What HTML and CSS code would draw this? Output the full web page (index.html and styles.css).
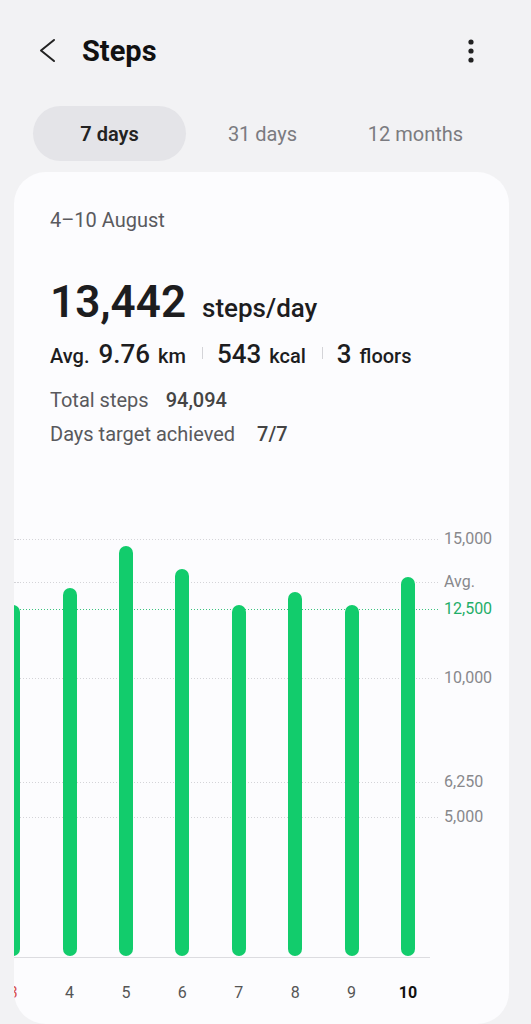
FILE: index.html
```html
<!DOCTYPE html>
<html lang="en">
<head>
  <meta charset="UTF-8">
  <meta name="viewport" content="width=device-width, initial-scale=1.0">
  <title>Steps</title>
  <link rel="stylesheet" href="styles.css">
</head>
<body>
  <header class="top-bar">
    <svg class="back" width="20" height="28" viewBox="0 0 20 28">
      <polyline points="16,3 3,13.5 16,24" fill="none" stroke="#222" stroke-width="2" stroke-linecap="round" stroke-linejoin="round"/>
    </svg>
    <h1>Steps</h1>
    <svg class="more" width="8" height="26" viewBox="0 0 8 26">
      <circle cx="4" cy="4" r="2.6" fill="#222"/>
      <circle cx="4" cy="13" r="2.6" fill="#222"/>
      <circle cx="4" cy="22" r="2.6" fill="#222"/>
    </svg>
  </header>

  <nav class="tabs">
    <div class="tab active">7 days</div>
    <div class="tab">31 days</div>
    <div class="tab">12 months</div>
  </nav>

  <section class="card">
    <div class="range">4–10 August</div>

    <div class="big">
      <span class="big-num">13,442</span>
      <span class="big-unit">steps/day</span>
    </div>

    <div class="stats">
      <span class="unit">Avg.</span>
      <span class="num first">9.76</span>
      <span class="unit">km</span>
      <span class="sep"></span>
      <span class="num">543</span>
      <span class="unit">kcal</span>
      <span class="sep"></span>
      <span class="num">3</span>
      <span class="unit">floors</span>
    </div>

    <div class="line"><span class="label">Total steps</span><span class="value">94,094</span></div>
    <div class="line"><span class="label">Days target achieved</span><span class="value wide">7/7</span></div>

    <div class="chart">
      <div class="plot">
        <div class="grid" style="bottom: 417px"><span class="grid-label">15,000</span></div>
        <div class="grid" style="bottom: 374px"><span class="grid-label">Avg.</span></div>
        <div class="grid target" style="bottom: 347px"><span class="grid-label">12,500</span></div>
        <div class="grid" style="bottom: 278px"><span class="grid-label">10,000</span></div>
        <div class="grid" style="bottom: 174px"><span class="grid-label">6,250</span></div>
        <div class="grid" style="bottom: 139px"><span class="grid-label">5,000</span></div>

        <div class="bars">
          <div class="col"><div class="bar" style="height: 351px"></div></div>
          <div class="col"><div class="bar" style="height: 368px"></div></div>
          <div class="col"><div class="bar" style="height: 410px"></div></div>
          <div class="col"><div class="bar" style="height: 387px"></div></div>
          <div class="col"><div class="bar" style="height: 351px"></div></div>
          <div class="col"><div class="bar" style="height: 364px"></div></div>
          <div class="col"><div class="bar" style="height: 351px"></div></div>
          <div class="col"><div class="bar" style="height: 379px"></div></div>
        </div>
      </div>

      <div class="days">
        <span class="day sunday">3</span>
        <span class="day">4</span>
        <span class="day">5</span>
        <span class="day">6</span>
        <span class="day">7</span>
        <span class="day">8</span>
        <span class="day">9</span>
        <span class="day today">10</span>
      </div>
    </div>
  </section>
</body>
</html>
```

FILE: styles.css
```css
body {
  margin: 0;
  background: #f2f2f4;
  font-family: Roboto, "Noto Sans", sans-serif;
  color: #1d1d1f;
}

.top-bar {
  height: 102px;
  display: flex;
  align-items: center;
  padding: 0 56px 0 38px;
}

.top-bar h1 {
  margin: 0 0 0 24px;
  font-size: 29px;
  font-weight: 700;
  color: #111;
  flex: 1;
}

.tabs {
  display: grid;
  grid-template-columns: repeat(3, 153px);
  margin: 4px 33px 0;
  height: 55px;
}

.tab {
  display: flex;
  align-items: center;
  justify-content: center;
  font-size: 20px;
  color: #7b7b80;
  border-radius: 28px;
}

.tab.active {
  background: #e4e4e8;
  color: #222;
  font-weight: 600;
}

.card {
  margin: 11px 22px 0 14px;
  background: #fcfcfe;
  border-radius: 32px;
  padding: 36px 0 21px 36px;
  overflow: hidden;
}

.range {
  font-size: 20px;
  line-height: 24px;
  color: #5a5a5e;
}

.big {
  margin-top: 44px;
  display: flex;
  align-items: baseline;
  height: 52px;
}

.big-num {
  font-size: 44px;
  line-height: 52px;
  font-weight: 600;
}

.big-unit {
  font-size: 26px;
  line-height: 1;
  font-weight: 500;
  margin-left: 16px;
}

.stats {
  margin-top: 10px;
  display: flex;
  align-items: baseline;
  height: 32px;
}

.stats .num {
  font-size: 26px;
  line-height: 32px;
  font-weight: 500;
  margin-right: 8px;
}

.stats .num.first {
  margin-left: 9px;
}

.stats .unit {
  font-size: 20px;
  line-height: 1;
  font-weight: 500;
}

.stats .sep {
  width: 1px;
  height: 12px;
  background: #d4d4d8;
  margin: 0 14px 0 16px;
  transform: translateY(-4px);
}

.line {
  font-size: 20px;
  line-height: 34px;
  color: #59595d;
}

.stats + .line {
  margin-top: 13px;
}

.line .value {
  margin-left: 17px;
  font-weight: 500;
  color: #444;
}

.line .value.wide {
  margin-left: 22px;
}

.chart {
  margin: 79px 0 0 -36px;
}

.plot {
  position: relative;
  height: 427px;
  width: 416px;
  border-bottom: 1px solid #dcdce0;
}

.grid {
  position: absolute;
  left: 0;
  width: 424px;
  height: 1px;
  background: repeating-linear-gradient(90deg, #d4d4d8 0 1.5px, transparent 1.5px 3px);
}

.grid.target {
  background: repeating-linear-gradient(90deg, #3cc47f 0 1.5px, transparent 1.5px 3px);
}

.grid-label {
  position: absolute;
  left: 430px;
  top: -10px;
  font-size: 16px;
  line-height: 20px;
  color: #88888c;
  white-space: nowrap;
}

.target .grid-label {
  color: #1fae68;
}

.bars,
.days {
  display: flex;
  margin-left: -29px;
}

.bars {
  position: absolute;
  left: 0;
  bottom: 1px;
  align-items: flex-end;
}

.col {
  width: 56.4px;
  display: flex;
  justify-content: center;
}

.bar {
  width: 14px;
  background: #12cc6c;
  border-radius: 7px;
}

.days {
  margin-top: 25px;
}

.day {
  width: 56.4px;
  text-align: center;
  font-size: 16px;
  line-height: 20px;
  color: #555;
}

.day.sunday {
  color: #d9534f;
}

.day.today {
  color: #111;
  font-weight: 700;
}
```
